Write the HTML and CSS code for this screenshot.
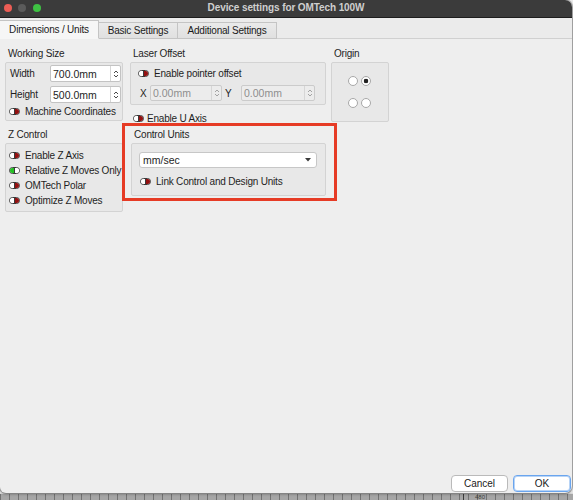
FILE: index.html
```html
<!DOCTYPE html>
<html lang="en">
<head>
<meta charset="utf-8">
<title>Device settings for OMTech 100W</title>
<link rel="stylesheet" href="styles.css">
</head>
<body>
<div class="desktop">
  <div class="ruler"><span class="ruler-major"></span><span class="ruler-label">480</span></div>
  <div class="window">
    <header class="titlebar">
      <div class="lights">
        <span class="light light-close"></span>
        <span class="light light-min"></span>
        <span class="light light-zoom"></span>
      </div>
      <div class="title">Device settings for OMTech 100W</div>
      <div></div>
    </header>
    <nav class="tabbar">
      <div class="tab tab-active tab-wide">Dimensions / Units</div>
      <div class="tab tab-narrow">Basic Settings</div>
      <div class="tab tab-wide">Additional Settings</div>
    </nav>
    <main class="pane">
      <div class="columns">
        <div class="col col-left">
          <section class="group">
            <div class="group-title">Working Size</div>
            <div class="box box-size">
              <div class="field-row">
                <span class="field-label">Width</span>
                <div class="spin spin-size">
                  <span class="spin-value">700.0mm</span>
                  <span class="spin-arrows"><svg width="6" height="10" viewBox="0 0 6 10"><path d="M1 4 L3 2 L5 4 M1 6 L3 8 L5 6" fill="none" stroke="#4a4a4a" stroke-width="1"/></svg></span>
                </div>
              </div>
              <div class="field-row field-row-2">
                <span class="field-label">Height</span>
                <div class="spin spin-size">
                  <span class="spin-value">500.0mm</span>
                  <span class="spin-arrows"><svg width="6" height="10" viewBox="0 0 6 10"><path d="M1 4 L3 2 L5 4 M1 6 L3 8 L5 6" fill="none" stroke="#4a4a4a" stroke-width="1"/></svg></span>
                </div>
              </div>
              <div class="check-row check-machine">
                <span class="toggle"><span class="knob"></span><span class="fill fill-off"></span></span>
                <span>Machine Coordinates</span>
              </div>
            </div>
          </section>
          <section class="group group-z">
            <div class="group-title">Z Control</div>
            <div class="box box-z">
              <div class="check-row z-row">
                <span class="toggle"><span class="knob"></span><span class="fill fill-off"></span></span>
                <span>Enable Z Axis</span>
              </div>
              <div class="check-row z-row">
                <span class="toggle"><span class="fill fill-on"></span><span class="knob"></span></span>
                <span>Relative Z Moves Only</span>
              </div>
              <div class="check-row z-row">
                <span class="toggle"><span class="knob"></span><span class="fill fill-off"></span></span>
                <span>OMTech Polar</span>
              </div>
              <div class="check-row z-row">
                <span class="toggle"><span class="knob"></span><span class="fill fill-off"></span></span>
                <span>Optimize Z Moves</span>
              </div>
            </div>
          </section>
        </div>
        <div class="col col-mid">
          <section class="group">
            <div class="group-title">Laser Offset</div>
            <div class="box box-offset">
              <div class="check-row pointer-row">
                <span class="toggle"><span class="knob"></span><span class="fill fill-off"></span></span>
                <span>Enable pointer offset</span>
              </div>
              <div class="xy-row">
                <span class="axis-label">X</span>
                <div class="spin spin-disabled spin-x">
                  <span class="spin-value">0.00mm</span>
                  <span class="spin-arrows"><svg width="6" height="10" viewBox="0 0 6 10"><path d="M1 4 L3 2 L5 4 M1 6 L3 8 L5 6" fill="none" stroke="#a3a3a3" stroke-width="1"/></svg></span>
                </div>
                <span class="axis-label axis-y">Y</span>
                <div class="spin spin-disabled spin-y">
                  <span class="spin-value">0.00mm</span>
                  <span class="spin-arrows"><svg width="6" height="10" viewBox="0 0 6 10"><path d="M1 4 L3 2 L5 4 M1 6 L3 8 L5 6" fill="none" stroke="#a3a3a3" stroke-width="1"/></svg></span>
                </div>
              </div>
            </div>
          </section>
          <div class="check-row u-row">
            <span class="toggle"><span class="knob"></span><span class="fill fill-off"></span></span>
            <span>Enable U Axis</span>
          </div>
          <div class="highlight">
            <section class="group">
              <div class="group-title">Control Units</div>
              <div class="box box-units">
                <div class="select">
                  <span>mm/sec</span>
                  <svg width="6" height="4" viewBox="0 0 6 4"><path d="M0 0 L6 0 L3 3.5 Z" fill="#3a3a3a"/></svg>
                </div>
                <div class="check-row link-row">
                  <span class="toggle"><span class="knob"></span><span class="fill fill-off"></span></span>
                  <span>Link Control and Design Units</span>
                </div>
              </div>
            </section>
          </div>
        </div>
        <div class="col col-right">
          <section class="group">
            <div class="group-title">Origin</div>
            <div class="box box-origin">
              <div class="radio-row"><span class="radio"></span><span class="radio radio-checked"></span></div>
              <div class="radio-row radio-row-2"><span class="radio"></span><span class="radio"></span></div>
            </div>
          </section>
        </div>
      </div>
      <footer class="buttons">
        <button class="btn btn-cancel">Cancel</button>
        <button class="btn btn-ok">OK</button>
      </footer>
    </main>
  </div>
</div>
</body>
</html>
```

FILE: styles.css
```css
* { box-sizing: border-box; }
html, body { margin: 0; padding: 0; }
body {
  background: #e9e9e9;
  font-family: "Liberation Sans", Arial, sans-serif;
  font-size: 10px;
  letter-spacing: -0.2px;
  color: #1e1e1e;
}
.desktop {
  position: relative;
  width: 573px;
  height: 500px;
  overflow: hidden;
}
.ruler {
  position: absolute;
  left: 0;
  right: 0;
  bottom: 0;
  height: 7px;
  border-top: 1px solid #dadada;
  background: repeating-linear-gradient(to right, #737373 0 1px, #a6a6a6 1px 9px);
  overflow: hidden;
}
.ruler-major {
  position: absolute;
  left: 463px;
  top: 0;
  width: 1px;
  height: 7px;
  background: #3c3c3c;
}
.ruler-label {
  position: absolute;
  left: 475px;
  top: 0;
  font-size: 6px;
  line-height: 6px;
  color: #3f3f3f;
  letter-spacing: 0;
}
.window {
  position: relative;
  width: 572px;
  height: 493px;
  background: #eeeeee;
  border-radius: 0 7px 7px 6px;
  box-shadow: 0 0 0 1px rgba(0,0,0,0.22), 0 1px 3px rgba(0,0,0,0.35);
  display: flex;
  flex-direction: column;
  overflow: hidden;
}
.titlebar {
  height: 18px;
  background: #3b3b3b;
  border-bottom: 1px solid #1d1d1d;
  display: grid;
  grid-template-columns: 1fr auto 1fr;
  align-items: center;
  padding-bottom: 2px;
}
.lights {
  display: flex;
  gap: 6.5px;
  padding-left: 3.5px;
}
.light {
  width: 8px;
  height: 8px;
  border-radius: 50%;
}
.light-close { background: #ec5d55; }
.light-min { background: #5b5b5b; }
.light-zoom { background: #3ec243; }
.title {
  color: #cfcfcf;
  font-weight: bold;
  font-size: 10px;
  letter-spacing: -0.1px;
}
.tabbar {
  height: 21px;
  padding-top: 2px;
  display: flex;
  align-items: flex-end;
  background: #ebebeb;
  border-bottom: 1px solid #d0d0d0;
}
.tab {
  height: 17px;
  margin-bottom: -1px;
  border: 1px solid #c4c4c4;
  border-left: none;
  background: linear-gradient(#eaeaea, #e0e0e0);
  display: flex;
  align-items: center;
  justify-content: center;
  color: #1a1a1a;
}
.tab-wide { width: 99px; }
.tab-narrow { width: 79px; }
.tab-active {
  height: 19px;
  background: #f6f6f6;
  border-bottom-color: #f6f6f6;
}
.pane {
  flex: 1;
  display: flex;
  flex-direction: column;
  padding: 7px 0 1px 0;
}
.columns {
  display: flex;
  align-items: flex-start;
  padding-left: 5px;
}
.col-left { width: 118px; }
.col-mid { width: 196px; margin-left: 7px; }
.col-right { width: 58px; margin-left: 5px; }
.group-title {
  height: 15px;
  line-height: 15px;
  padding-left: 3px;
  margin-bottom: 1px;
}
.box {
  border: 1px solid #d3d3d3;
  background: #e8e8e8;
  border-radius: 2px;
}
.box-size { padding: 2px 1px 2px 4px; }
.field-row {
  display: flex;
  align-items: center;
  height: 17px;
}
.field-row-2 { margin-top: 4px; }
.field-label { width: 40px; }
.spin {
  display: flex;
  height: 17px;
  border: 1px solid #c3c3c3;
  background: #ffffff;
  border-radius: 2px;
}
.spin-size { width: 71px; }
.spin-value {
  flex: 1;
  display: flex;
  align-items: center;
  padding-left: 2px;
  font-size: 10.5px;
  letter-spacing: 0;
}
.spin-arrows {
  width: 10px;
  border-left: 1px solid #d6d6d6;
  display: flex;
  align-items: center;
  justify-content: center;
}
.check-row {
  display: flex;
  align-items: center;
  gap: 5px;
  white-space: nowrap;
}
.check-machine { height: 13px; margin-top: 2px; margin-left: -1px; }
.toggle {
  display: flex;
  width: 11px;
  height: 7px;
  border: 1px solid #3a3a3a;
  border-radius: 4px;
  overflow: hidden;
  background: #ffffff;
  flex: none;
}
.knob {
  width: 4px;
  background: #ffffff;
}
.fill { flex: 1; }
.fill-off { background: #931111; border-left: 1px solid #3a3a3a; }
.fill-on { background: #24c224; border-right: 1px solid #3a3a3a; }
.group-z { margin-top: 6px; }
.box-z { padding: 4px 0 3px 3px; }
.z-row { height: 15px; }
.box-offset { padding: 4px 8px 3px 7px; }
.pointer-row { height: 12px; }
.xy-row {
  display: flex;
  align-items: center;
  height: 16px;
  margin-top: 6px;
  margin-left: 2px;
}
.axis-label { width: 10px; }
.axis-y { width: 19px; padding-left: 3px; }
.spin-disabled {
  height: 16px;
  background: #ececec;
  border-color: #cbcbcb;
  color: #8e8e8e;
}
.spin-x { width: 72px; }
.spin-y { width: 74px; }
.u-row {
  height: 12px;
  margin-top: 7px;
  padding-left: 3px;
  gap: 3px;
}
.highlight {
  margin-top: -1px;
  margin-left: -8px;
  width: 215px;
  border: 3px solid #e63b25;
  padding: 1px 8px 2px 6px;
}
.box-units { padding: 8px 8px 7px 7px; }
.select {
  height: 16px;
  border: 1px solid #c7c7c7;
  background: #ffffff;
  border-radius: 3px;
  display: flex;
  align-items: center;
  justify-content: space-between;
  padding: 0 5px 0 3px;
  font-size: 10.5px;
  letter-spacing: 0;
}
.link-row {
  height: 14px;
  margin-top: 6px;
  padding-left: 1px;
}
.box-origin { padding: 13px 0; }
.radio-row {
  display: flex;
  justify-content: center;
  gap: 3px;
  padding-right: 1px;
}
.radio-row-2 { margin-top: 12px; }
.radio {
  width: 10px;
  height: 10px;
  border-radius: 50%;
  border: 1px solid #a8a8a8;
  background: #ffffff;
}
.radio-checked {
  background: radial-gradient(circle, #222222 0 2px, #ffffff 2.6px);
}
.buttons {
  margin-top: auto;
  display: flex;
  justify-content: flex-end;
  gap: 5px;
  padding-right: 1px;
}
.btn {
  height: 17px;
  border: 1px solid #bababa;
  border-radius: 4px;
  background: #ffffff;
  font-family: inherit;
  font-size: 10px;
  color: #1a1a1a;
  padding: 0;
}
.btn-cancel { width: 57px; }
.btn-ok {
  width: 58px;
  border-color: #6aa5ee;
  box-shadow: inset 0 0 0 1px #b8d4f6;
}
```
